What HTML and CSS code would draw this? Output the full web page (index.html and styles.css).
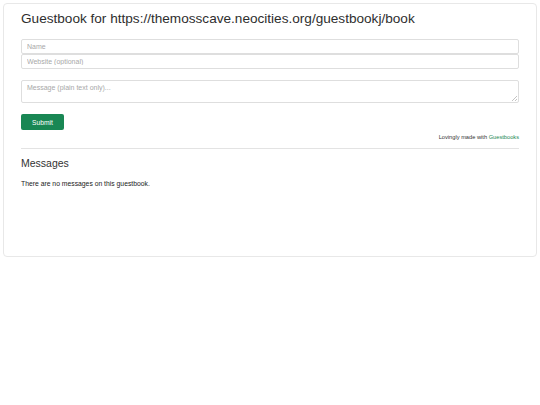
FILE: index.html
```html
<!DOCTYPE html>
<html lang="en">
  <head>
    <meta charset="UTF-8" />
    <title>Guestbook</title>
    <link rel="stylesheet" href="styles.css">
  </head>
  <body>
    <div class="card">
      <h1 class="title">Guestbook for https://themosscave.neocities.org/guestbookj/book</h1>

      <form class="entry-form">
        <div class="field-group">
          <input class="field" type="text" placeholder="Name" />
          <input class="field" type="text" placeholder="Website (optional)" />
        </div>
        <textarea class="field message" placeholder="Message (plain text only)..."></textarea>
        <button class="submit" type="button">Submit</button>
      </form>

      <p class="credit">Lovingly made with <a href="#">Guestbooks</a></p>

      <hr class="divider" />

      <h2 class="messages-title">Messages</h2>
      <p class="empty">There are no messages on this guestbook.</p>
    </div>
  </body>
</html>
```

FILE: styles.css
```css
* {
  margin: 0;
  padding: 0;
  box-sizing: border-box;
}

body {
  font-family: "Liberation Sans", Arial, sans-serif;
  color: #2b2b2b;
  background: #ffffff;
  padding: 3px;
}

.card {
  width: 534px;
  height: 254px;
  border: 1px solid #e8e8e8;
  border-radius: 4px;
  padding: 5px 17px 0;
}

.title {
  font-size: 13.6px;
  font-weight: normal;
  line-height: 19px;
  color: #2e2e2e;
}

.entry-form {
  margin-top: 11px;
  display: flex;
  flex-direction: column;
  align-items: flex-start;
}

.field-group {
  width: 100%;
  display: flex;
  flex-direction: column;
}

.field {
  width: 100%;
  height: 15px;
  border: 1px solid #dedede;
  border-radius: 2px;
  padding: 0 5px;
  font-family: "Liberation Sans", Arial, sans-serif;
  font-size: 7px;
  color: #333;
  background: #fff;
}

.field::placeholder {
  color: #a8a8a8;
}

/* faint hand-drawn resize grip, like the original */
.message {
  margin-top: 11px;
  height: 23px;
  padding: 3px 5px;
  resize: none;
  background: #fff linear-gradient(135deg, transparent 48%, #c4c4c4 48%, #c4c4c4 58%, transparent 58%, transparent 72%, #c4c4c4 72%, #c4c4c4 82%, transparent 82%) no-repeat right 1px bottom 1px / 5px 5px;
}

.submit {
  margin-top: 11px;
  width: 43px;
  height: 16px;
  border: none;
  border-radius: 2px;
  background: #198754;
  color: #ffffff;
  font-family: "Liberation Sans", Arial, sans-serif;
  font-size: 6.7px;
}

.credit {
  margin-top: 3px;
  text-align: right;
  font-size: 5.7px;
  line-height: 8px;
  color: #333;
}

.credit a {
  color: #198754;
  text-decoration: none;
}

.divider {
  margin-top: 7px;
  border: none;
  border-top: 1px solid #e3e3e3;
}

.messages-title {
  margin-top: 8px;
  font-size: 10.5px;
  font-weight: normal;
  line-height: 13px;
  color: #333;
}

.empty {
  margin-top: 10px;
  font-size: 6.8px;
  line-height: 8px;
  color: #222;
}
```
